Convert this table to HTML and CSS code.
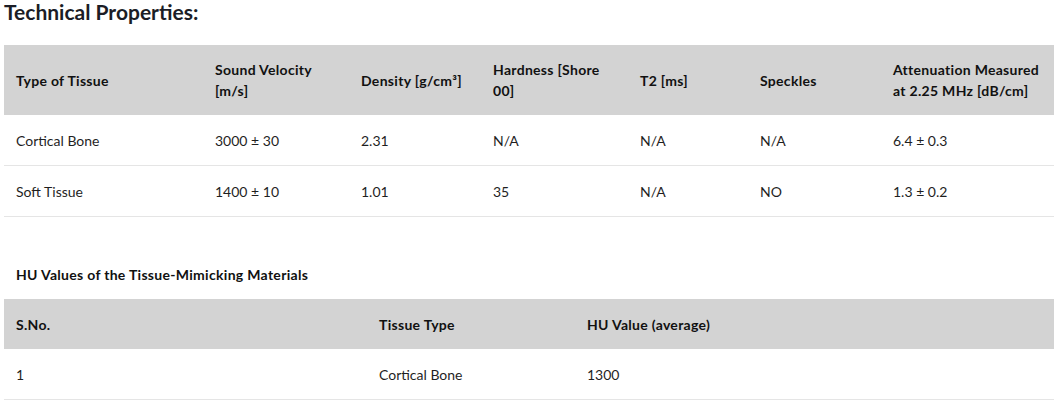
FILE: index.html
```html
<!DOCTYPE html>
<html lang="en">
<head>
<meta charset="utf-8">
<title>Technical Properties</title>
<link rel="stylesheet" href="styles.css">
</head>
<body>
  <h2 class="title">Technical Properties:</h2>
  <table class="props">
    <colgroup>
      <col class="c1"><col class="c2"><col class="c3"><col class="c4"><col class="c5"><col class="c6"><col class="c7">
    </colgroup>
    <thead>
      <tr>
        <th>Type of Tissue</th>
        <th>Sound Velocity [m/s]</th>
        <th>Density [g/cm³]</th>
        <th>Hardness [Shore 00]</th>
        <th>T2 [ms]</th>
        <th>Speckles</th>
        <th>Attenuation Measured at 2.25 MHz [dB/cm]</th>
      </tr>
    </thead>
    <tbody>
      <tr>
        <td>Cortical Bone</td><td>3000 ± 30</td><td>2.31</td><td>N/A</td><td>N/A</td><td>N/A</td><td>6.4 ± 0.3</td>
      </tr>
      <tr>
        <td>Soft Tissue</td><td>1400 ± 10</td><td>1.01</td><td>35</td><td>N/A</td><td>NO</td><td>1.3 ± 0.2</td>
      </tr>
    </tbody>
  </table>

  <h4 class="subtitle">HU Values of the Tissue-Mimicking Materials</h4>
  <table class="hu">
    <colgroup>
      <col class="h1"><col class="h2"><col class="h3">
    </colgroup>
    <thead>
      <tr><th>S.No.</th><th>Tissue Type</th><th>HU Value (average)</th></tr>
    </thead>
    <tbody>
      <tr><td>1</td><td>Cortical Bone</td><td>1300</td></tr>
    </tbody>
  </table>
</body>
</html>
```

FILE: styles.css
```css
html, body {
  margin: 0;
  padding: 0;
  background: #ffffff;
}

body {
  padding: 0 8px 0 4px;
  font-family: "Lato", "Open Sans", sans-serif;
  color: #1f1f1f;
  font-size: 14px;
  line-height: 21px;
}

.title {
  margin: 0 0 21px 0;
  font-size: 21px;
  line-height: 24px;
  font-weight: 700;
  color: #1b1d26;
}

table {
  width: 100%;
  border-collapse: collapse;
  table-layout: fixed;
}

th, td {
  text-align: left;
  vertical-align: middle;
  padding: 14px 12px;
}

th {
  background: #d3d3d3;
  font-weight: 700;
  font-size: 14px;
  letter-spacing: 0.3px;
  color: #111111;
}

td {
  font-weight: 400;
  border-bottom: 1px solid #e5e5e5;
  padding: 15px 12px 14px;
}

.props th {
  padding: 14px 12px 14px;
}

.hu th {
  padding: 15px 12px 14px;
}

.c1 { width: 199px; }
.c2 { width: 146px; }
.c3 { width: 132px; }
.c4 { width: 147px; }
.c5 { width: 120px; }
.c6 { width: 133px; }
.c7 { width: 173px; }

.h1 { width: 363px; }
.h2 { width: 208px; }
.h3 { width: 479px; }

.subtitle {
  margin: 47px 0 14px 12px;
  font-size: 14px;
  letter-spacing: 0.3px;
  line-height: 21px;
  font-weight: 700;
  color: #111111;
}
```
